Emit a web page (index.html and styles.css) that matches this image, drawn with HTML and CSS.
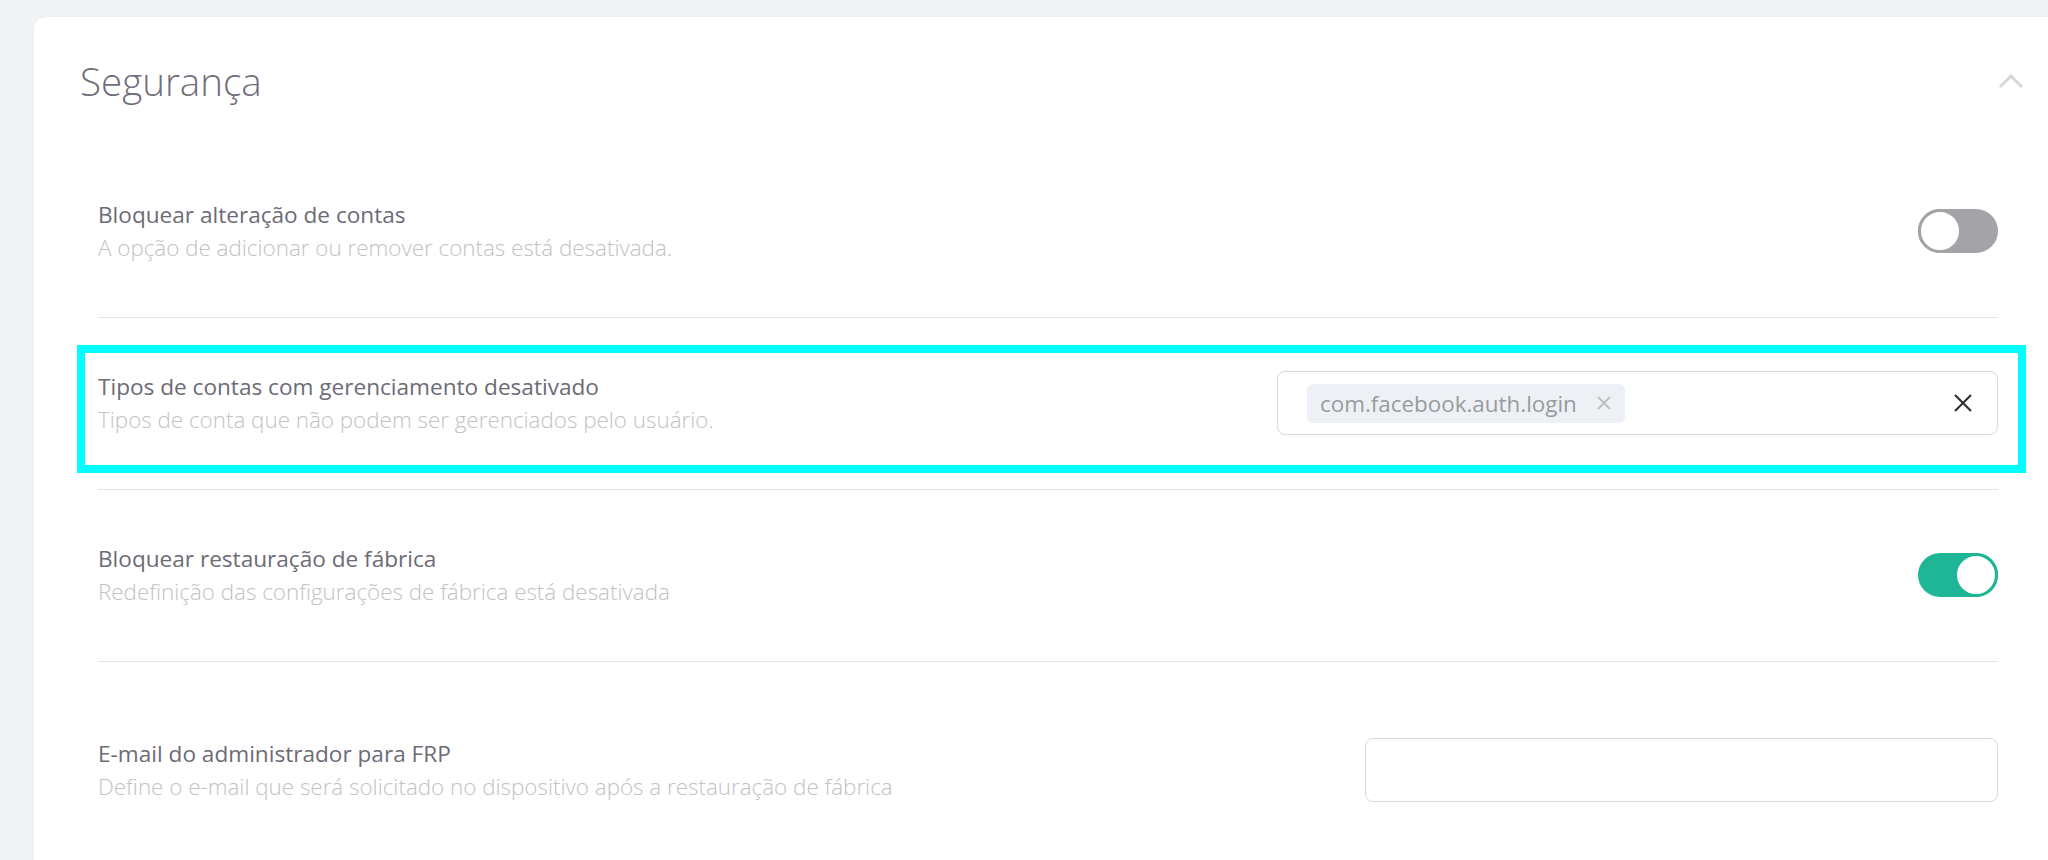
FILE: index.html
```html
<!DOCTYPE html>
<html lang="pt-BR">
<head>
<meta charset="utf-8">
<title>Segurança</title>
<link rel="stylesheet" href="styles.css">
</head>
<body>
<div class="card">
  <div class="card-header">
    <h2 class="title">Segurança</h2>
    <svg class="chevron" width="26" height="16" viewBox="0 0 26 16"><polyline points="2,14 13,3 24,14" fill="none" stroke="#d6d6db" stroke-width="3"/></svg>
  </div>
  <div class="settings">
    <div class="row">
      <div class="text">
        <div class="label">Bloquear alteração de contas</div>
        <div class="desc">A opção de adicionar ou remover contas está desativada.</div>
      </div>
      <span class="toggle"><span class="knob"></span></span>
    </div>
    <div class="row row-mark">
      <div class="text">
        <div class="label">Tipos de contas com gerenciamento desativado</div>
        <div class="desc">Tipos de conta que não podem ser gerenciados pelo usuário.</div>
      </div>
      <div class="field field-chips">
        <span class="chip">com.facebook.auth.login
          <svg class="chip-x" width="14" height="14" viewBox="0 0 14 14"><path d="M1 1L13 13M13 1L1 13" stroke="#bdbdc1" stroke-width="1.8"/></svg>
        </span>
        <svg class="clear-x" width="18" height="18" viewBox="0 0 18 18"><path d="M1 1L17 17M17 1L1 17" stroke="#2c2c30" stroke-width="2"/></svg>
      </div>
      <div class="highlight"></div>
    </div>
    <div class="row">
      <div class="text">
        <div class="label">Bloquear restauração de fábrica</div>
        <div class="desc">Redefinição das configurações de fábrica está desativada</div>
      </div>
      <span class="toggle toggle-on"><span class="knob"></span></span>
    </div>
    <div class="row row-last">
      <div class="text">
        <div class="label">E-mail do administrador para FRP</div>
        <div class="desc">Define o e-mail que será solicitado no dispositivo após a restauração de fábrica</div>
      </div>
      <div class="field field-email"></div>
    </div>
  </div>
</div>
</body>
</html>
```
FILE: styles.css
```css
html, body {
  margin: 0;
  padding: 0;
}
body {
  background: #f2f3f7;
  font-family: "Open Sans", "Noto Sans", sans-serif;
  overflow: hidden;
  height: 860px;
}
.card {
  margin: 17px 0 0 34px;
  width: 2100px;
  height: 1000px;
  background: #ffffff;
  border-radius: 12px;
  box-shadow: 0 0 3px rgba(0, 0, 0, 0.05);
  padding: 37px 0 0 46px;
  box-sizing: border-box;
}
.card-header {
  width: 1944px;
  height: 54px;
  display: flex;
  align-items: center;
  justify-content: space-between;
}
.title {
  margin: 0;
  font-size: 38.5px;
  line-height: 54px;
  font-weight: 300;
  color: #6f6e7b;
}
.chevron {
  display: block;
}
.settings {
  margin: 38px 0 0 18px;
  width: 1900px;
}
.row {
  position: relative;
  display: flex;
  align-items: center;
  justify-content: space-between;
  padding: 52px 0 53px;
  border-bottom: 1px solid #e5e5e7;
}
.row-last {
  padding-top: 75px;
  border-bottom: none;
}
.label {
  font-size: 22.6px;
  line-height: 33px;
  color: #6c6b76;
}
.desc {
  font-size: 22.4px;
  line-height: 33px;
  font-weight: 300;
  color: #c2c2c4;
}
.toggle {
  display: flex;
  width: 80px;
  height: 44px;
  border-radius: 22px;
  background: #a4a3a8;
}
.toggle .knob {
  width: 44px;
  height: 44px;
  box-sizing: border-box;
  border-radius: 50%;
  background: #ffffff;
  border: 3px solid #a4a3a8;
}
.toggle-on {
  background: #1fb696;
  justify-content: flex-end;
}
.toggle-on .knob {
  border-color: #1fb696;
}
.field {
  height: 64px;
  box-sizing: border-box;
  border: 1px solid #d9d9de;
  border-radius: 8px;
  display: flex;
  align-items: center;
}
.field-chips {
  width: 721px;
  padding: 0 25px 0 29px;
  justify-content: space-between;
}
.field-email {
  width: 633px;
}
.chip {
  display: flex;
  align-items: center;
  gap: 20px;
  height: 39px;
  padding: 0 14px 0 13px;
  background: #edf1f5;
  border-radius: 6px;
  font-size: 22.4px;
  color: #9a9a9e;
}
.chip-x, .clear-x {
  display: block;
}
.highlight {
  position: absolute;
  left: -21px;
  right: -28px;
  top: 27px;
  height: 128px;
  box-sizing: border-box;
  border: 8px solid #00ffff;
  pointer-events: none;
}
```
